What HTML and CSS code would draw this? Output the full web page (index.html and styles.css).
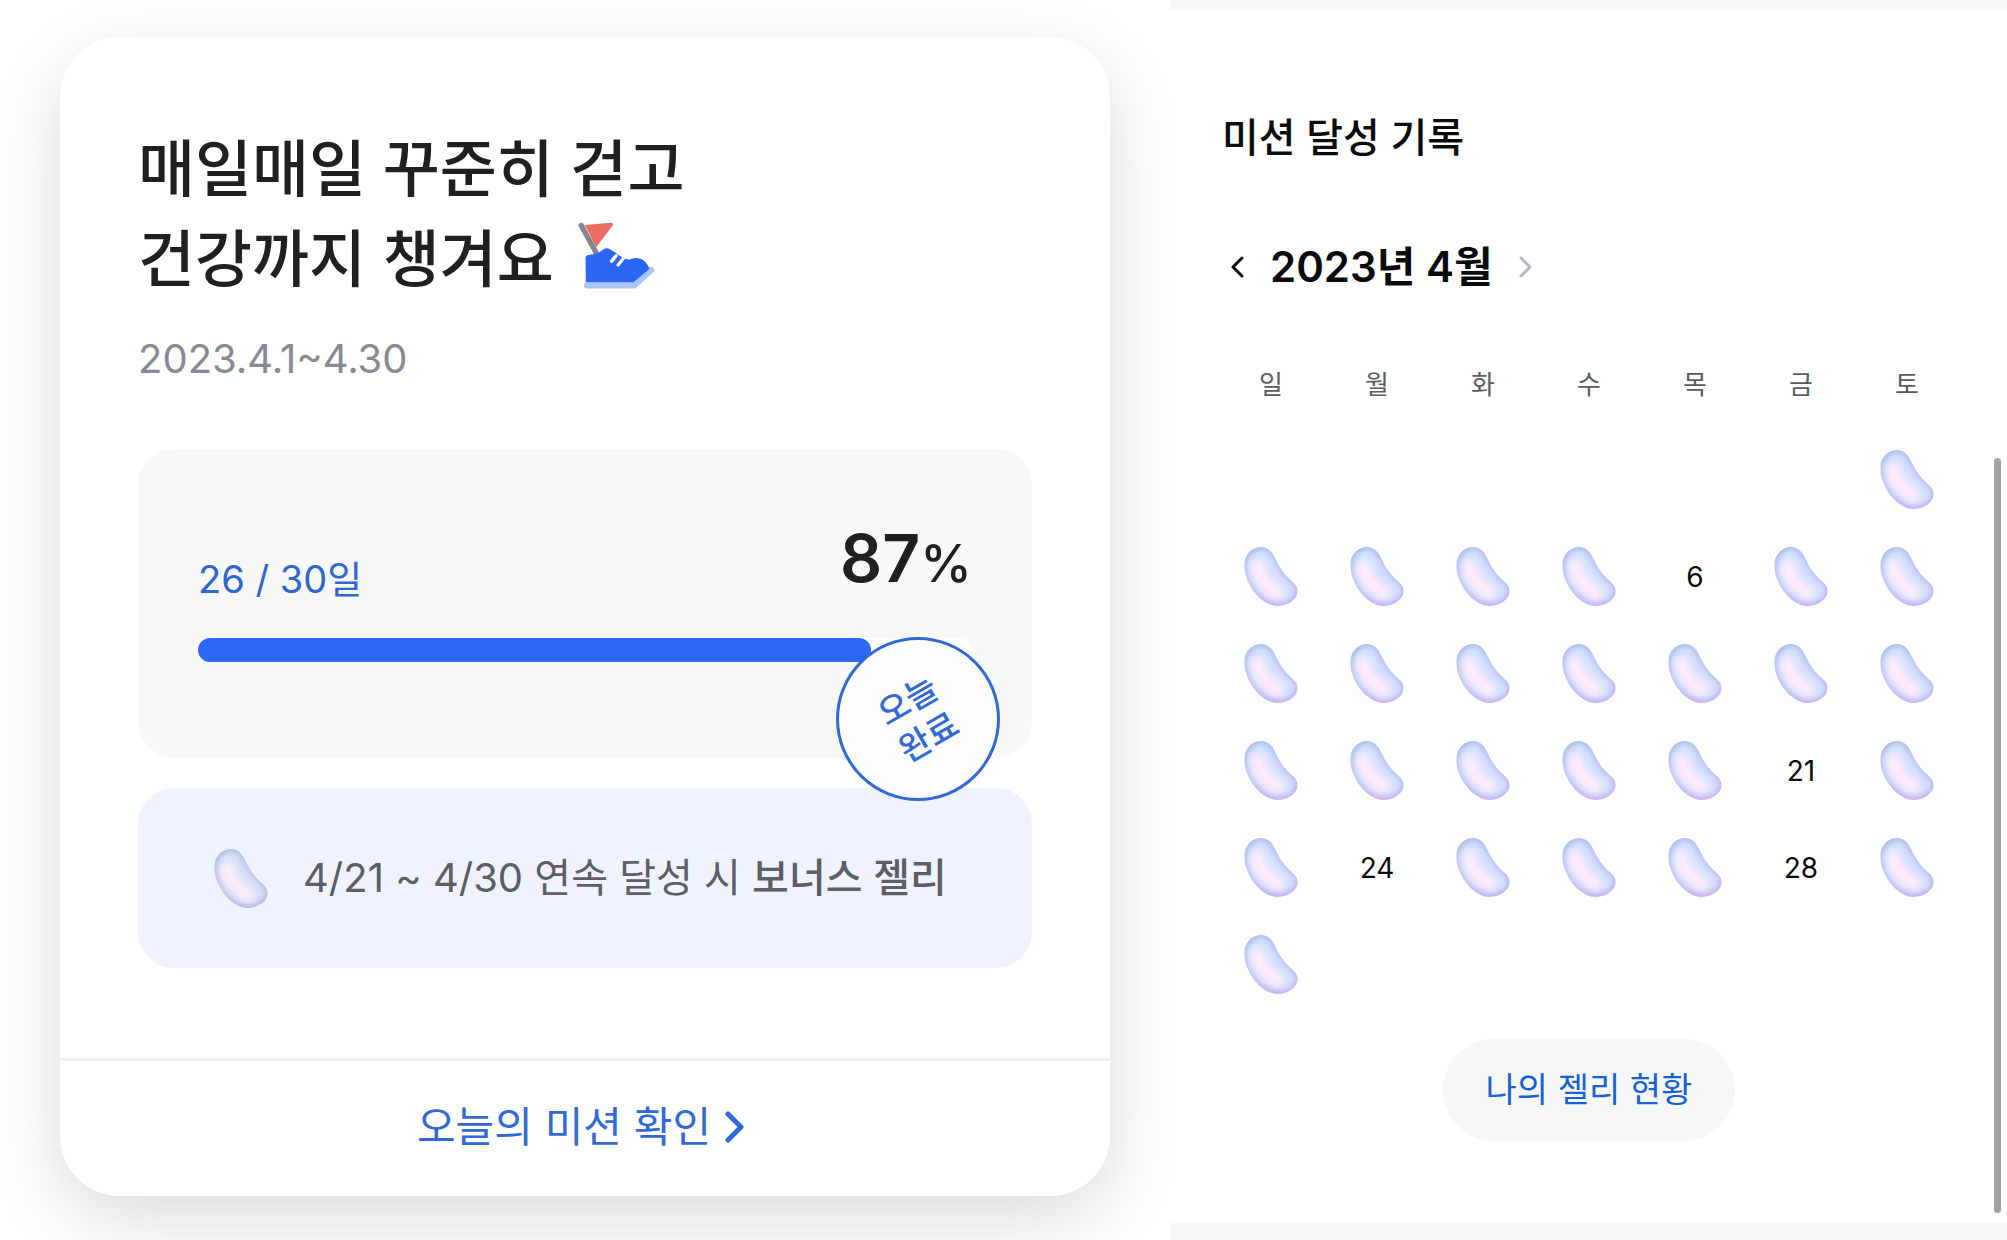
FILE: index.html
```html
<!DOCTYPE html>
<html lang="ko">
<head>
<meta charset="utf-8">
<meta name="viewport" content="width=device-width, initial-scale=1">
<title>미션 달성 기록</title>
<link rel="stylesheet" href="styles.css">
</head>
<body>
<svg class="sprite" aria-hidden="true">
  <defs>
    <linearGradient id="bean-edge" x1="0" y1="0" x2="0.5" y2="1">
      <stop offset="0" stop-color="#a9bde6"/>
      <stop offset="0.5" stop-color="#c0c8f8"/>
      <stop offset="1" stop-color="#c3b6f0"/>
    </linearGradient>
    <filter id="soft-rim" x="-20%" y="-20%" width="140%" height="140%"><feGaussianBlur stdDeviation="6"/></filter>
    <filter id="soft-core" x="-60%" y="-60%" width="220%" height="220%"><feGaussianBlur stdDeviation="11"/></filter>
    <clipPath id="bean-clip"><path d="M50 0C72 0 84 16 92 32C104 58 118 80 136 96C150 108 160 118 160 132C158 158 128 176 98 176C66 174 36 148 18 116C4 92-2 66 1 44C6 16 28 0 50 0Z"/></clipPath>
  </defs>
  <symbol id="bean" viewBox="0 0 160 176">
    <g clip-path="url(#bean-clip)">
      <rect width="160" height="176" fill="url(#bean-edge)"/>
      <path d="M52 10C70 12 78 28 86 44C98 68 112 86 130 102C144 112 153 122 151 134C147 154 122 166 100 164C72 162 42 138 26 110C14 90 8 68 11 48C16 24 34 10 52 10Z" fill="#d3e0ff" filter="url(#soft-rim)"/>
      <path d="M40 58C44 86 64 118 98 134" fill="none" stroke="#ffecfc" stroke-width="42" stroke-linecap="round" filter="url(#soft-core)"/>
    </g>
  </symbol>
</svg>

<main class="page">
  <section class="mission">
    <article class="card">
      <div class="card-body">
        <h1 class="headline">매일매일 꾸준히 걷고<br>건강까지 챙겨요
          <svg class="shoe" viewBox="54 36 230 204" aria-hidden="true">
            <path d="M74 45L153 38Q162 40 157 47L108 112Z" fill="#ec6b62"/>
            <path d="M63 46L110 132" stroke="#85868b" stroke-width="16" stroke-linecap="round"/>
            <path d="M81 226H222L273 180" fill="none" stroke="#a9c5fa" stroke-width="19" stroke-linecap="round" stroke-linejoin="round"/>
            <path d="M76 144Q76 136 86 135L112 130Q124 124 130 118Q140 112 150 118L168 130Q192 148 208 149C232 137 256 146 268 176L220 217H77Z" fill="#2b66f5"/>
            <path d="M154 154L168 137M174 165L190 145" stroke="#fff" stroke-width="10" stroke-linecap="round"/>
          </svg>
        </h1>
        <p class="period">2023.4.1~4.30</p>

        <div class="progress">
          <div class="progress-head">
            <span class="count">26 / 30일</span>
            <strong class="percent">87<span class="percent-sign">%</span></strong>
          </div>
          <div class="track" role="progressbar" aria-label="미션 달성률" aria-valuemin="0" aria-valuemax="100" aria-valuenow="87">
            <div class="fill" style="width: 87%"></div>
          </div>
          <div class="stamp"><span class="stamp-text">오늘<br>완료</span></div>
        </div>

        <div class="bonus">
          <svg class="bean bean-muted" aria-hidden="true"><use href="#bean"/></svg>
          <p class="bonus-text">4/21 ~ 4/30 연속 달성 시 <strong class="bonus-name">보너스 젤리</strong></p>
        </div>
      </div>
      <a class="card-link" href="#record">오늘의 미션 확인
        <svg class="link-arrow" viewBox="0 0 20 32" aria-hidden="true"><path d="M3 3L16 16L3 29"/></svg>
      </a>
    </article>
  </section>

  <section class="record" id="record">
    <h2 class="record-title">미션 달성 기록</h2>
    <div class="month">
      <button class="month-button" type="button" aria-label="이전 달"><svg class="month-arrow" viewBox="0 0 14 24" aria-hidden="true"><path d="M12 3L3 12L12 21"/></svg></button>
      <h3 class="month-name">2023년 4월</h3>
      <button class="month-button month-next" type="button" aria-label="다음 달"><svg class="month-arrow" viewBox="0 0 14 24" aria-hidden="true"><path d="M2 3L11 12L2 21"/></svg></button>
    </div>
    <table class="calendar">
      <thead>
        <tr><th scope="col">일</th><th scope="col">월</th><th scope="col">화</th><th scope="col">수</th><th scope="col">목</th><th scope="col">금</th><th scope="col">토</th></tr>
      </thead>
      <tbody>
        <tr><td></td><td></td><td></td><td></td><td></td><td></td><td><svg class="bean"><use href="#bean"/></svg></td></tr>
        <tr><td><svg class="bean"><use href="#bean"/></svg></td><td><svg class="bean"><use href="#bean"/></svg></td><td><svg class="bean"><use href="#bean"/></svg></td><td><svg class="bean"><use href="#bean"/></svg></td><td>6</td><td><svg class="bean"><use href="#bean"/></svg></td><td><svg class="bean"><use href="#bean"/></svg></td></tr>
        <tr><td><svg class="bean"><use href="#bean"/></svg></td><td><svg class="bean"><use href="#bean"/></svg></td><td><svg class="bean"><use href="#bean"/></svg></td><td><svg class="bean"><use href="#bean"/></svg></td><td><svg class="bean"><use href="#bean"/></svg></td><td><svg class="bean"><use href="#bean"/></svg></td><td><svg class="bean"><use href="#bean"/></svg></td></tr>
        <tr><td><svg class="bean"><use href="#bean"/></svg></td><td><svg class="bean"><use href="#bean"/></svg></td><td><svg class="bean"><use href="#bean"/></svg></td><td><svg class="bean"><use href="#bean"/></svg></td><td><svg class="bean"><use href="#bean"/></svg></td><td>21</td><td><svg class="bean"><use href="#bean"/></svg></td></tr>
        <tr><td><svg class="bean"><use href="#bean"/></svg></td><td>24</td><td><svg class="bean"><use href="#bean"/></svg></td><td><svg class="bean"><use href="#bean"/></svg></td><td><svg class="bean"><use href="#bean"/></svg></td><td>28</td><td><svg class="bean"><use href="#bean"/></svg></td></tr>
        <tr><td><svg class="bean"><use href="#bean"/></svg></td><td></td><td></td><td></td><td></td><td></td><td></td></tr>
      </tbody>
    </table>
    <button class="jelly-button" type="button">나의 젤리 현황</button>
    <div class="scroll-thumb"></div>
  </section>
</main>
</body>
</html>
```
FILE: styles.css
```css
* { box-sizing: border-box; }

body {
  margin: 0;
  background: #fff;
  color: #202020;
  font-family: Inter, "Noto Sans CJK KR", sans-serif;
}

h1, h2, h3, p { margin: 0; }

button {
  border: 0;
  font-family: inherit;
  cursor: pointer;
}

.sprite {
  position: absolute;
  width: 0;
  height: 0;
}

.page {
  display: grid;
  grid-template-columns: 1170fr 837fr;
  min-height: 100vh;
}

/* Mission card */
.mission {
  padding: 37px 60px 44px;
  overflow: hidden;
}

.card {
  border-radius: 60px;
  background: #fff;
  box-shadow: 0 24px 72px rgba(0, 0, 0, 0.14);
}

.card-body { padding: 88px 78px 90px; }

.headline {
  font-size: 62px;
  font-weight: 500;
  line-height: 90px;
}

.shoe {
  width: 77px;
  height: 68px;
  margin-left: 8px;
  vertical-align: -8px;
}

.period {
  margin-top: 24px;
  color: #878a93;
  font-size: 40px;
  line-height: 60px;
}

.progress {
  position: relative;
  margin-top: 60px;
  padding: 72px 60px 96px;
  border-radius: 36px;
  background: #f8f8f8;
}

.progress-head {
  display: flex;
  justify-content: space-between;
  height: 88px;
}

.count {
  align-self: flex-end;
  color: #2f66d0;
  font-size: 38px;
  line-height: 60px;
}

.percent {
  font-size: 66px;
  font-weight: 600;
  line-height: 74px;
}

.percent-sign {
  font-size: 52px;
  font-weight: 500;
}

.track {
  height: 24px;
  margin-top: 29px;
  border-radius: 12px;
  background: #fff;
}

.fill {
  height: 100%;
  border-radius: 12px;
  background: #2d68f6;
}

.stamp {
  position: absolute;
  right: 32px;
  bottom: -43px;
  display: grid;
  place-items: center;
  width: 164px;
  height: 164px;
  border: 3px solid #3269d4;
  border-radius: 50%;
  background: #fdfdfe;
}

.stamp-text {
  color: #3269d4;
  font-size: 34px;
  font-weight: 500;
  line-height: 42px;
  transform: rotate(-30deg);
}

.bonus {
  display: flex;
  align-items: center;
  gap: 35px;
  min-height: 180px;
  margin-top: 30px;
  padding: 0 76px;
  border-radius: 36px;
  background: #eef3fe;
}

.bean {
  display: block;
  width: 54px;
  height: 59px;
  margin: 0 auto;
}

.bean-muted {
  flex: none;
  margin: 0;
  filter: saturate(0.7);
}

.bonus-text {
  color: #5d5e66;
  font-size: 40px;
  line-height: 60px;
  white-space: nowrap;
}

.bonus-name { font-weight: 500; }

.card-link {
  display: flex;
  align-items: center;
  justify-content: center;
  gap: 14px;
  min-height: 138px;
  padding: 0 8px 4px 0;
  border-top: 3px solid #f0f0f0;
  color: #3269d4;
  font-size: 42px;
  line-height: 60px;
  text-decoration: none;
}

.link-arrow {
  width: 20px;
  height: 32px;
  fill: none;
  stroke: currentColor;
  stroke-width: 5;
  stroke-linecap: round;
  stroke-linejoin: round;
}

/* Record calendar */
.record {
  position: relative;
  display: flex;
  flex-direction: column;
  padding: 98px 47px 82px 48px;
  border-top: 10px solid #f7f7f7;
  border-bottom: 18px solid #f7f7f7;
  color: #0b0b0c;
}

.record-title {
  padding-left: 4px;
  font-size: 40px;
  font-weight: 500;
  line-height: 60px;
}

.month {
  display: flex;
  align-items: center;
  gap: 26px;
  margin-top: 69px;
  padding-left: 12px;
}

.month-name {
  font-size: 42px;
  font-weight: 600;
  line-height: 60px;
}

.month-button {
  display: flex;
  padding: 0;
  background: none;
  color: #0b0b0c;
}

.month-next { color: #b5b7c0; }

.month-arrow {
  width: 14px;
  height: 24px;
  fill: none;
  stroke: currentColor;
  stroke-width: 3;
  stroke-linecap: round;
  stroke-linejoin: round;
}

.calendar {
  width: 100%;
  margin-top: 68px;
  border-collapse: collapse;
  table-layout: fixed;
}

.calendar th,
.calendar td {
  padding: 0;
  text-align: center;
}

.calendar th {
  height: 66px;
  padding-bottom: 26px;
  color: #5b5c62;
  font-size: 26px;
  font-weight: 400;
  line-height: 40px;
}

.calendar td {
  height: 97px;
  font-size: 28px;
  line-height: 40px;
}

.jelly-button {
  align-self: center;
  margin-top: 26px;
  padding: 21px 43px;
  border-radius: 51px;
  background: #f7f7f7;
  color: #1662cf;
  font-size: 34px;
  line-height: 60px;
}

.scroll-thumb {
  position: absolute;
  top: 448px;
  right: 6px;
  bottom: 10px;
  width: 7px;
  border-radius: 4px;
  background: #a3a3a3;
}
```
